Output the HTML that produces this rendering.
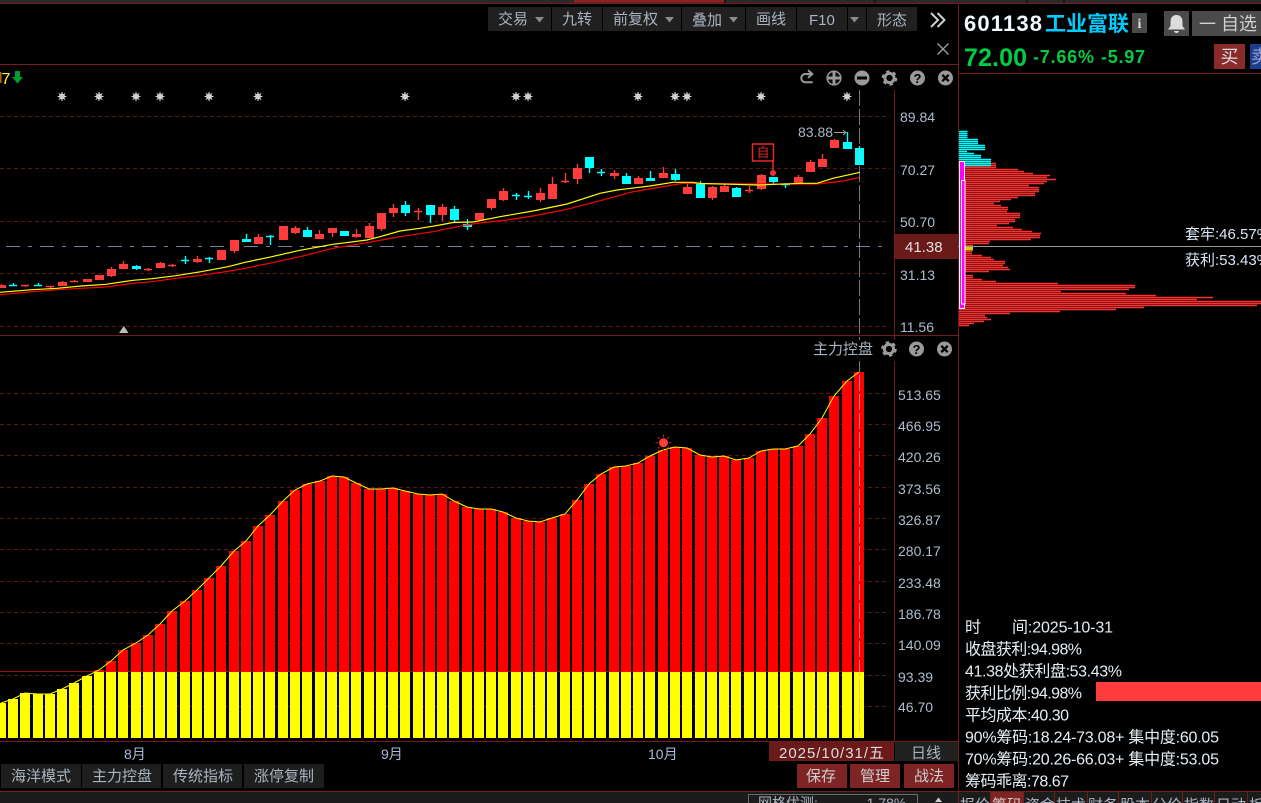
<!DOCTYPE html>
<html><head><meta charset="utf-8"><title>601138 工业富联</title>
<style>
html,body{margin:0;padding:0;background:#000;width:1261px;height:803px;overflow:hidden}
svg{display:block;font-family:"Liberation Sans","Noto Sans CJK SC",sans-serif}
.a{font-size:14px;fill:#aebccc}
.t{font-size:15px;fill:#aab4c0}
.i{font-size:16px;fill:#e6eef5}
</style></head><body>
<svg width="1261" height="803" viewBox="0 0 1261 803" xmlns="http://www.w3.org/2000/svg">
<defs>
<g id="s"><circle r="3" fill="#cfcfcf"/><path d="M-4.5 0H4.5M0-4.5V4.5M-3.2-3.2L3.2 3.2M-3.2 3.2L3.2-3.2" stroke="#cfcfcf" stroke-width="1"/></g>
<g id="g"><circle r="4.6" fill="none" stroke="#9a9a9a" stroke-width="3"/><circle r="6.6" fill="none" stroke="#9a9a9a" stroke-width="2.4" stroke-dasharray="3.4 3.5"/></g>
<g id="q"><circle r="7.5" fill="#9a9a9a"/><text x="0" y="5" text-anchor="middle" font-size="13" font-weight="bold" fill="#000">?</text></g>
<g id="x"><circle r="7.5" fill="#9a9a9a"/><path d="M-3.2-3.2L3.2 3.2M-3.2 3.2L3.2-3.2" stroke="#000" stroke-width="2.4"/></g>
</defs>
<rect width="1261" height="803" fill="#000"/>

<!-- top strip -->
<rect x="0" y="0" width="1261" height="3" fill="#2a2a2a"/>
<rect x="574" y="0" width="150" height="2.5" fill="#8a2222"/>
<path d="M725 0V3M875 0V3M1027 0V3M1064 0V3" stroke="#000"/>
<rect x="0" y="3" width="1261" height="1" fill="#6e1c1c"/>

<!-- toolbar -->
<g fill="#202020">
<rect x="488" y="7" width="63" height="24"/><rect x="552" y="7" width="50" height="24"/><rect x="603" y="7" width="78" height="24"/><rect x="682" y="7" width="63" height="24"/><rect x="746" y="7" width="50" height="24"/><rect x="797" y="7" width="50" height="24"/><rect x="848" y="7" width="18" height="24"/><rect x="867" y="7" width="50" height="24"/>
</g>
<text class="t" x="498" y="24">交易</text><text class="t" x="562" y="24">九转</text><text class="t" x="613" y="24">前复权</text><text class="t" x="692" y="25">叠加</text><text class="t" x="756" y="24">画线</text><text class="t" x="809" y="25">F10</text><text class="t" x="877" y="25">形态</text>
<path d="M535 17h9l-4.500 5.500zM665 17h9l-4.500 5.500zM729 17h9l-4.500 5.500zM850 17h9l-4.500 5.500z" fill="#8a8a8a"/>
<path d="M931 13L938 20L931 27M937.500 13L944.500 20L937.500 27" fill="none" stroke="#cfcfcf" stroke-width="2"/>
<path d="M937.500 43.500L948.500 54.500M948.500 43.500L937.500 54.500" stroke="#a0a0a0" stroke-width="1.300"/>
<rect x="0" y="64" width="958" height="1" fill="#7a1c1c"/>

<!-- top-left indicator -->
<rect x="0" y="72" width="1.500" height="11" fill="#c06010"/>
<text x="1.500" y="84" font-size="16" fill="#ffff33">7</text>
<path d="M15 71h5v6h3l-5.500 6.500l-5.500-6.500h3z" fill="#00a030"/>

<!-- icons row -->
<path d="M812.700 82.300H804.500a4.300 4.300 0 0 1 0-8.300H811.500M808 70.300l4.300 3.700l-4.300 3.700" fill="none" stroke="#9a9a9a" stroke-width="2"/>
<circle cx="834" cy="78" r="7.500" fill="#9a9a9a"/><path d="M827.500 71.500h5v5h-5zM835.500 71.500h5v5h-5zM827.500 79.500h5v5h-5zM835.500 79.500h5v5h-5z" fill="#000"/><circle cx="834" cy="78" r="6.800" fill="none" stroke="#9a9a9a" stroke-width="1.500"/>
<circle cx="862" cy="78" r="7.500" fill="#9a9a9a"/><rect x="857" y="76.500" width="10" height="3" fill="#000"/>
<use href="#g" x="889.500" y="78"/><use href="#q" x="917.500" y="78"/><use href="#x" x="945.500" y="78"/>

<!-- stars -->
<use href="#s" x="62" y="96.500"/><use href="#s" x="99" y="96.500"/><use href="#s" x="136" y="96.500"/><use href="#s" x="160" y="96.500"/><use href="#s" x="209" y="96.500"/><use href="#s" x="258" y="96.500"/><use href="#s" x="405" y="96.500"/><use href="#s" x="516" y="96.500"/><use href="#s" x="528" y="96.500"/><use href="#s" x="638" y="96.500"/><use href="#s" x="675" y="96.500"/><use href="#s" x="687" y="96.500"/><use href="#s" x="761" y="96.500"/><use href="#s" x="847" y="96.500"/>

<!-- grid upper + lower -->
<path d="M0 116.500H890M0 168.500H890M0 221.500H890M0 273.500H890M0 326.500H890M0 393.500H890M0 424.500H890M0 455.500H890M0 487.500H890M0 518.500H890M0 549.500H890M0 581.500H890M0 612.500H890M0 643.500H890M0 675.500H890M0 706.500H890" stroke="#5a1515" stroke-dasharray="4 3" fill="none"/>
<path d="M6 246.500H890" stroke="#75839a" stroke-dasharray="14 8 4 8" fill="none"/>
<rect x="0" y="335" width="958" height="1" fill="#6e1c1c"/>
<path d="M0 671.500H864" stroke="#a01010"/>

<!-- axes -->
<path d="M894.500 90V741" stroke="#6e1c1c"/>
<path d="M958.500 4V791" stroke="#6e1c1c"/>
<rect x="958" y="73" width="303" height="1" fill="#6e1c1c"/>

<!-- candles: red -->
<path fill="none" stroke="#ff3c3c" stroke-width="1.400" d="M1.500 284V288M62.500 281V286M111.500 267V277M123.500 261V269M160.500 262V268M197.500 256V263M234.500 240V253M258.500 234V244M295.500 226V234M319.500 230V239M332.500 228V237M356.500 229V238M369.500 223V238M381.500 213V231M393.500 204V217M442.500 204V221M491.500 199V210M503.500 188V201M540.500 188V202M552.500 177V199M577.500 164V184M614.500 170V179M638.500 176V184M663.500 167V178M687.500 184V194M712.500 186V200M724.500 184V192M761.500 174V190M798.500 175V184M810.500 160V172M822.500 154V167M834.500 139V148M25.500 285V287M50.500 286V288M74.500 280V282M148.500 268V271M172.500 264V267M418.500 208V220M565.500 173V183M749.500 186V193M21 285.500h8M46 286.500h8M70 281.500h8M144 269.500h8M168 265.500h8M414 211.500h8M561 181.500h8M745 190.500h8"/>
<path fill="#ff3c3c" shape-rendering="crispEdges" d="M-3 285h9V288h-9zM58 282h9V286h-9zM83 279h9V282h-9zM95 275h9V280h-9zM107 269h9V276h-9zM119 264h9V269h-9zM156 263h9V268h-9zM193 259h9V262h-9zM217 250h9V260h-9zM230 240h9V251h-9zM254 237h9V244h-9zM279 226h9V240h-9zM291 228h9V233h-9zM315 234h9V239h-9zM328 228h9V233h-9zM352 234h9V237h-9zM365 226h9V238h-9zM377 213h9V229h-9zM389 208h9V213h-9zM438 207h9V215h-9zM475 213h9V220h-9zM487 199h9V208h-9zM499 191h9V200h-9zM536 193h9V200h-9zM548 184h9V199h-9zM573 168h9V179h-9zM610 173h9V176h-9zM634 178h9V184h-9zM659 173h9V178h-9zM683 187h9V194h-9zM708 187h9V198h-9zM720 186h9V192h-9zM757 175h9V189h-9zM794 177h9V183h-9zM806 162h9V172h-9zM818 159h9V167h-9zM830 140h9V148h-9z"/>
<!-- candles: cyan -->
<path fill="none" stroke="#00ffff" stroke-width="1.400" d="M136.500 265V270M246.500 234V242M307.500 227V237M405.500 201V216M430.500 205V223M454.500 206V222M467.500 219V230M589.500 157V173M626.500 173V184M650.500 171V181M675.500 169V181M700.500 181V198M736.500 187V197M773.500 177V184M847.500 132V149M859.500 146V165M13.500 283V286M38.500 283V286M185.500 256V264M209.500 257V263M270.500 235V245M516.500 193V200M528.500 191V199M601.500 169V176M785.500 183V188M9 285.500h8M34 285.500h8M181 260.500h8M205 258.500h8M266 236.500h8M512 195.500h8M524 196.500h8M597 172.500h8M781 184.500h9"/>
<path fill="#00ffff" shape-rendering="crispEdges" d="M132 266h9V269h-9zM242 239h9V242h-9zM303 230h9V237h-9zM340 231h9V236h-9zM401 205h9V213h-9zM426 205h9V215h-9zM450 209h9V220h-9zM463 224h9V227h-9zM585 157h9V168h-9zM622 176h9V184h-9zM646 178h9V181h-9zM671 174h9V180h-9zM696 184h9V198h-9zM732 188h9V197h-9zM769 177h9V182h-9zM843 142h9V149h-9zM855 148h9V165h-9z"/>
<!-- MAs -->
<polyline fill="none" stroke="#ff0000" stroke-width="1.200" points="0,294.700 32,291.700 57,289.700 81,288.300 106,287 133,283.300 152,281.700 176,278.300 201,275.300 228,271.300 245,268.300 269,263.300 300,256.700 333,248.300 367,242.700 400,236.700 433,231.700 457,226.700 477,223.300 507,220 533,216 567,209.300 600,200.700 633,191.700 667,186 683,183.300 767,184 817,184 843,181 860,177.300"/>
<polyline fill="none" stroke="#ffff00" stroke-width="1.200" points="0,292.300 32,289.700 57,288.300 81,286 106,284.300 133,280.300 152,278.700 176,275.700 201,271.700 228,266.700 245,262.300 269,257.300 300,250.300 333,244.300 367,240 380,236.700 400,231 420,228.300 440,225 453,222.500 473,222 500,216.700 533,211 567,204 600,193.300 617,190 650,186 673,182.300 693,182.300 700,183.500 733,184.300 757,185 803,183.300 817,183.300 833,178.300 860,172.300"/>

<!-- markers -->
<text x="798" y="137" font-size="14" fill="#a9b7c8">83.88</text>
<path d="M834 132.500H846M843 130l3 2.500l-3 2.500" fill="none" stroke="#a0a0a0"/>
<rect x="752.500" y="144" width="21" height="17" fill="#000" stroke="#e62a2a" stroke-width="1.500"/>
<text x="763" y="157" text-anchor="middle" font-size="13" fill="#e62a2a">自</text>
<path d="M773 160V173" stroke="#e62a2a" stroke-width="1.500"/>
<circle cx="773" cy="173" r="3" fill="#ee3030"/>
<path d="M119 333h9.500l-4.700-7z" fill="#bdbdbd"/>

<!-- lower bars -->
<path fill="#ff0000" shape-rendering="crispEdges" d="M94 670h10V672h-10zM106 661h10V672h-10zM118 650h10V672h-10zM131 643h10V672h-10zM143 635h10V672h-10zM155 624h10V672h-10zM167 611h10V672h-10zM180 601h10V672h-10zM192 590h10V672h-10zM204 578h10V672h-10zM216 566h10V672h-10zM229 551h10V672h-10zM241 541h10V672h-10zM253 526h10V672h-10zM265 515h10V672h-10zM278 501h10V672h-10zM290 490h10V672h-10zM302 484h10V672h-10zM315 481h10V672h-10zM327 476h10V672h-10zM339 477h10V672h-10zM351 483h10V672h-10zM364 489h10V672h-10zM376 489h10V672h-10zM388 488h10V672h-10zM400 491h10V672h-10zM413 494h10V672h-10zM425 495h10V672h-10zM437 494h10V672h-10zM449 501h10V672h-10zM462 507h10V672h-10zM474 509h10V672h-10zM486 509h10V672h-10zM498 512h10V672h-10zM511 518h10V672h-10zM523 521h10V672h-10zM535 522h10V672h-10zM547 518h10V672h-10zM560 514h10V672h-10zM572 500h10V672h-10zM584 484h10V672h-10zM596 474h10V672h-10zM609 467h10V672h-10zM621 466h10V672h-10zM633 463h10V672h-10zM645 456h10V672h-10zM658 450h10V672h-10zM670 447h10V672h-10zM682 448h10V672h-10zM695 455h10V672h-10zM707 457h10V672h-10zM719 456h10V672h-10zM731 460h10V672h-10zM744 458h10V672h-10zM756 451h10V672h-10zM768 449h10V672h-10zM780 449h10V672h-10zM793 446h10V672h-10zM805 434h10V672h-10zM817 418h10V672h-10zM829 396h10V672h-10zM842 381h10V672h-10zM854 372h10V672h-10z"/>
<path fill="#ffff00" shape-rendering="crispEdges" d="M-4 703h10V738h-10zM8 699h10V738h-10zM20 693h10V738h-10zM33 694h10V738h-10zM45 694h10V738h-10zM57 689h10V738h-10zM69 683h10V738h-10zM82 676h10V738h-10zM94 672h10V738h-10zM106 672h10V738h-10zM118 672h10V738h-10zM131 672h10V738h-10zM143 672h10V738h-10zM155 672h10V738h-10zM167 672h10V738h-10zM180 672h10V738h-10zM192 672h10V738h-10zM204 672h10V738h-10zM216 672h10V738h-10zM229 672h10V738h-10zM241 672h10V738h-10zM253 672h10V738h-10zM265 672h10V738h-10zM278 672h10V738h-10zM290 672h10V738h-10zM302 672h10V738h-10zM315 672h10V738h-10zM327 672h10V738h-10zM339 672h10V738h-10zM351 672h10V738h-10zM364 672h10V738h-10zM376 672h10V738h-10zM388 672h10V738h-10zM400 672h10V738h-10zM413 672h10V738h-10zM425 672h10V738h-10zM437 672h10V738h-10zM449 672h10V738h-10zM462 672h10V738h-10zM474 672h10V738h-10zM486 672h10V738h-10zM498 672h10V738h-10zM511 672h10V738h-10zM523 672h10V738h-10zM535 672h10V738h-10zM547 672h10V738h-10zM560 672h10V738h-10zM572 672h10V738h-10zM584 672h10V738h-10zM596 672h10V738h-10zM609 672h10V738h-10zM621 672h10V738h-10zM633 672h10V738h-10zM645 672h10V738h-10zM658 672h10V738h-10zM670 672h10V738h-10zM682 672h10V738h-10zM695 672h10V738h-10zM707 672h10V738h-10zM719 672h10V738h-10zM731 672h10V738h-10zM744 672h10V738h-10zM756 672h10V738h-10zM768 672h10V738h-10zM780 672h10V738h-10zM793 672h10V738h-10zM805 672h10V738h-10zM817 672h10V738h-10zM829 672h10V738h-10zM842 672h10V738h-10zM854 672h10V738h-10z"/>
<polyline fill="none" stroke="#ffff00" stroke-width="1" points="1,703 13,699 25,693 38,694 50,694 62,689 74,683 87,676 99,670 111,661 123,650 136,643 148,635 160,624 172,611 185,601 197,590 209,578 221,566 234,551 246,541 258,526 270,515 283,501 295,490 307,484 320,481 332,476 344,477 356,483 369,489 381,489 393,488 405,491 418,494 430,495 442,494 454,501 467,507 479,509 491,509 503,512 516,518 528,521 540,522 552,518 565,514 577,500 589,484 601,474 614,467 626,466 638,463 650,456 663,450 675,447 687,448 700,455 712,457 724,456 736,460 749,458 761,451 773,449 785,449 798,446 810,434 822,418 834,396 847,381 859,372"/>
<!-- crosshair -->
<path d="M859.500 90V738" stroke="#b8bcc6" stroke-opacity=".65" stroke-dasharray="16 3" fill="none"/>
<!-- sun -->
<circle cx="663.500" cy="442.700" r="4.500" fill="#ff3c3c"/>
<path d="M663.500 434.700v2.500M663.500 448.200v2.500M655.500 442.700h2.500M669 442.700h2.500M657.800 437l1.800 1.800M667.400 446.600l1.800 1.800M657.800 448.400l1.800-1.800M667.400 438.800l1.800-1.800" stroke="#b03030" fill="none"/>

<!-- lower label -->
<rect x="810" y="340" width="147" height="21" fill="#000"/>
<text x="813" y="354" font-size="15" fill="#aab4c0">主力控盘</text>
<use href="#g" x="889" y="349"/><use href="#q" x="916.500" y="349"/><use href="#x" x="944.500" y="349"/>

<!-- axis labels -->
<text class="a" x="900" y="122">89.84</text><text class="a" x="900" y="175">70.27</text><text class="a" x="900" y="227">50.70</text><text class="a" x="900" y="280">31.13</text><text class="a" x="900" y="332">11.56</text>
<text class="a" x="898" y="400">513.65</text><text class="a" x="898" y="431">466.95</text><text class="a" x="898" y="462">420.26</text><text class="a" x="898" y="494">373.56</text><text class="a" x="898" y="525">326.87</text><text class="a" x="898" y="556">280.17</text><text class="a" x="898" y="588">233.48</text><text class="a" x="898" y="619">186.78</text><text class="a" x="898" y="650">140.09</text><text class="a" x="898" y="682">93.39</text><text class="a" x="898" y="712">46.70</text>
<rect x="895" y="234" width="63" height="25" fill="#6b1a1a"/>
<text x="905" y="252" font-size="15" fill="#e0e0e0">41.38</text>

<!-- bottom axis -->
<rect x="0" y="741" width="958" height="1" fill="#6e1c1c"/>
<text x="124" y="759" font-size="14" fill="#a8bcd8">8月</text><text x="381" y="759" font-size="14" fill="#a8bcd8">9月</text><text x="648" y="759" font-size="14" fill="#a8bcd8">10月</text>
<rect x="769" y="742" width="125" height="19" fill="#6b1a1a"/>
<text x="779" y="758" font-size="15" fill="#dcdcdc" textLength="105">2025/10/31/五</text>
<rect x="895" y="742" width="63" height="19" fill="#202020"/>
<text x="911" y="758" font-size="15" fill="#aab4c0">日线</text>

<g fill="#1e1e1e"><rect x="1" y="764" width="80" height="24"/><rect x="82" y="764" width="79" height="24"/><rect x="163" y="764" width="79" height="24"/><rect x="244" y="764" width="80" height="24"/></g>
<text class="t" x="11" y="781">海洋模式</text><text class="t" x="92" y="781">主力控盘</text><text class="t" x="173" y="781">传统指标</text><text class="t" x="254" y="781">涨停复制</text>
<g fill="#7e2424"><rect x="797" y="764" width="50" height="24"/><rect x="850" y="764" width="50" height="24"/><rect x="904" y="764" width="50" height="24"/></g>
<text x="806" y="781" font-size="15" fill="#cfcfcf">保存</text><text x="860" y="781" font-size="15" fill="#cfcfcf">管理</text><text x="914" y="781" font-size="15" fill="#cfcfcf">战法</text>

<!-- bottom strip -->
<rect x="0" y="792" width="1261" height="11" fill="#1c1c1c"/>
<rect x="0" y="791" width="1261" height="1" fill="#6e2020"/>
<rect x="748.500" y="794.500" width="169" height="20" fill="#1c1c1c" stroke="#6a6a6a"/>
<text x="758" y="808" font-size="14" fill="#aab4c0">网格优测:</text><text x="862" y="808" font-size="14" fill="#aab4c0">-1.78%</text>
<path d="M935 802l3.500-4.500l3.500 4.500z" fill="#cfcfcf"/>
<rect x="991" y="792" width="32" height="11" fill="#7e2424"/>
<path d="M958.500 792V803M990.500 792V803M1023.500 792V803M1054.500 792V803M1087.500 792V803M1118.500 792V803M1151.500 792V803M1182.500 792V803M1214.500 792V803M1247.500 792V803" stroke="#6e2020"/>
<g font-size="15" fill="#aab4c0"><text x="960" y="810">报价</text><text x="992" y="810" fill="#d0d0d0">筹码</text><text x="1025" y="810">资金</text><text x="1056" y="810">技术</text><text x="1088" y="810">财务</text><text x="1120" y="810">股本</text><text x="1152" y="810">分价</text><text x="1184" y="810">指数</text><text x="1216" y="810">日动</text><text x="1249" y="810">板</text></g>

<!-- right header -->
<text x="964" y="31" font-size="22" font-weight="bold" fill="#f4f8ff" textLength="78">601138</text>
<text x="1045" y="31" font-size="21" font-weight="bold" fill="#00ccff">工业富联</text>
<rect x="1132" y="13" width="15" height="20" fill="#4a4a4a"/>
<text x="1139.500" y="28" text-anchor="middle" font-size="14" font-weight="bold" font-family="Liberation Serif,serif" fill="#e0e0e0">i</text>
<rect x="1164" y="11" width="25" height="25" fill="#4a4a4a"/>
<path d="M1176.500 15c-4.300 0-6 3.200-6 7v4l-2.500 3.500h17l-2.500-3.500v-4c0-3.800-1.700-7-6-7zM1174 31h5a2.500 2 0 0 1-5 0z" fill="#dcdcdc"/>
<rect x="1192" y="11" width="69" height="25" fill="#4a4a4a"/>
<text x="1199" y="30" font-size="17" fill="#d0d0d0">一</text>
<text x="1221" y="30" font-size="18" fill="#d0d0d0">自选</text>
<text x="964" y="66" font-size="25" font-weight="bold" fill="#00cc44" textLength="63">72.00</text>
<text x="1033" y="63" font-size="18" font-weight="bold" fill="#00cc44" textLength="61">-7.66%</text>
<text x="1101" y="63" font-size="18" font-weight="bold" fill="#00cc44" textLength="44">-5.97</text>
<rect x="1214" y="44" width="31" height="25" fill="#8a2a2a"/>
<text x="1229.500" y="63" text-anchor="middle" font-size="18" fill="#ddd">买</text>
<rect x="1250" y="44" width="11" height="25" fill="#1d3c8c"/>
<text x="1251" y="63" font-size="18" fill="#8fa0d0">卖</text>

<!-- chips -->
<g fill="none" stroke-width="1.500">
<path stroke="#ff3030" d="M959 163.500H996M959 165.500H996M959 167.500H996M959 169.500H1018M959 171.500H1024M959 173.500H1033M959 175.500H1050M959 177.500H1047M959 179.500H1056M959 181.500H1047M959 183.500H1044M959 185.500H1029M959 187.500H1039M959 189.500H1039M959 191.500H1039M959 193.500H1035M959 195.500H1035M959 197.500H1018M959 199.500H1011M959 201.500H1000M959 203.500H994M959 205.500H1001M959 207.500H1008M959 209.500H1008M959 211.500H1007M959 213.500H1020M959 215.500H1020M959 217.500H1020M959 219.500H1015M959 221.500H1015M959 223.500H1009M959 225.500H997M959 227.500H1013M959 229.500H1022M959 231.500H1032M959 233.500H1041M959 235.500H1040M959 237.500H1040M959 239.500H1031M959 241.500H990M959 243.500H989M959 245.500H973M959 251.500H972M959 253.500H972M959 255.500H982M959 257.500H991M959 259.500H994M959 261.500H1005M959 263.500H1005M959 265.500H1003M959 267.500H1008M959 269.500H1010M959 271.500H989M959 275.500H973M959 277.500H973M959 279.500H982M959 281.500H996M959 283.500H1058M959 285.500H1135M959 287.500H1135M959 289.500H1129M959 291.500H1061M959 293.500H1126M959 295.500H1156M959 297.500H1213M959 299.500H1197M959 301.500H1261M959 303.500H1261M959 305.500H1257M959 307.500H1144M959 309.500H1116M959 311.500H1060M959 313.500H1010M959 315.500H985M959 317.500H987M959 319.500H991M959 321.500H984M959 323.500H974M959 325.500H969"/>
<path stroke="#00ffff" d="M959 131.500H967.500M959 133.500H967.500M959 135.500H967.500M959 137.500H967.500M959 139.500H978M959 141.500H978M959 143.500H978M959 145.500H985M959 147.500H985M959 149.500H985M959 151.500H967M959 153.500H974M959 155.500H981M959 157.500H981M959 159.500H991M959 161.500H991M959 163.500H991M959 165.500H991"/>
</g>
<rect x="959" y="246.500" width="14" height="4" fill="#d8d000"/>
<path d="M958 246.500H1261" stroke="#9a9a9a"/>
<rect x="959.500" y="161.500" width="5" height="147" fill="#ff00ff" stroke="#fff"/>
<rect x="961.500" y="180.500" width="3.500" height="123.500" fill="#ff00ff" stroke="#fff"/>
<text x="1185" y="239" font-size="15" fill="#d8e6f4">套牢:46.57%</text>
<text x="1185" y="265" font-size="15" fill="#d8e6f4">获利:53.43%</text>

<!-- info -->
<text class="i" x="965" y="632.500">时</text><text class="i" x="1012" y="632.500" textLength="101">间:2025-10-31</text>
<text class="i" x="965" y="654.500" textLength="117">收盘获利:94.98%</text>
<text class="i" x="965" y="676.500" textLength="157">41.38处获利盘:53.43%</text>
<text class="i" x="965" y="698.500" textLength="117">获利比例:94.98%</text>
<rect x="1096" y="682" width="165" height="19" fill="#ff3c3c"/>
<text class="i" x="965" y="720.500" textLength="104">平均成本:40.30</text>
<text class="i" x="965" y="742.500" textLength="254">90%筹码:18.24-73.08+ 集中度:60.05</text>
<text class="i" x="965" y="764.500" textLength="254">70%筹码:20.26-66.03+ 集中度:53.05</text>
<text class="i" x="965" y="786.500" textLength="104">筹码乖离:78.67</text>
</svg>
</body></html>
